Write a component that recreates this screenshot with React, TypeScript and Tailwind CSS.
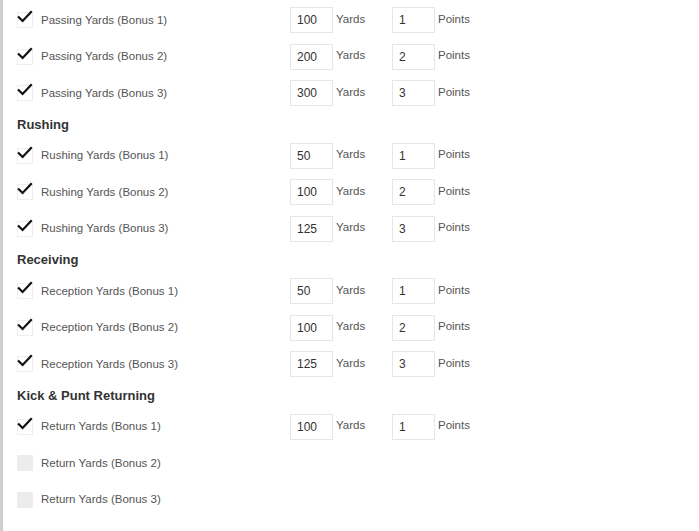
const sections = [
  {
    title: null,
    rows: [
      { label: "Passing Yards (Bonus 1)", on: true, yards: "100", points: "1" },
      { label: "Passing Yards (Bonus 2)", on: true, yards: "200", points: "2" },
      { label: "Passing Yards (Bonus 3)", on: true, yards: "300", points: "3" },
    ],
  },
  {
    title: "Rushing",
    rows: [
      { label: "Rushing Yards (Bonus 1)", on: true, yards: "50", points: "1" },
      { label: "Rushing Yards (Bonus 2)", on: true, yards: "100", points: "2" },
      { label: "Rushing Yards (Bonus 3)", on: true, yards: "125", points: "3" },
    ],
  },
  {
    title: "Receiving",
    rows: [
      { label: "Reception Yards (Bonus 1)", on: true, yards: "50", points: "1" },
      { label: "Reception Yards (Bonus 2)", on: true, yards: "100", points: "2" },
      { label: "Reception Yards (Bonus 3)", on: true, yards: "125", points: "3" },
    ],
  },
  {
    title: "Kick & Punt Returning",
    rows: [
      { label: "Return Yards (Bonus 1)", on: true, yards: "100", points: "1" },
      { label: "Return Yards (Bonus 2)", on: false, yards: "", points: "" },
      { label: "Return Yards (Bonus 3)", on: false, yards: "", points: "" },
    ],
  },
];

type Row = { label: string; on: boolean; yards: string; points: string };

// ─── Checkbox ───
function Check({ on }: { on: boolean }) {
  if (!on) return <div className="w-4 h-4 bg-[#ececec] rounded-[1px]" />;
  return (
    <div className="relative w-4 h-4 bg-white border border-[#eeeeee]">
      <svg
        className="absolute -top-[4px] -left-[1px]"
        width="16"
        height="16"
        viewBox="0 0 16 16"
        fill="none"
      >
        <path d="M1.8 8.2 L5.6 12 L14 3" stroke="#111" strokeWidth="2.2" strokeLinecap="square" />
      </svg>
    </div>
  );
}

function Field({ value }: { value: string }) {
  return (
    <div className="w-[43px] h-[26px] border border-[#e6e6e6] bg-white flex items-center pl-[6px] text-[12px] text-[#333]">
      {value}
    </div>
  );
}

function BonusRow({ row }: { row: Row }) {
  return (
    <div className="flex items-center h-[36.5px]">
      <Check on={row.on} />
      <div className="ml-2 w-[249px] text-[11.5px] text-[#555]">{row.label}</div>
      {row.on && (
        <>
          <Field value={row.yards} />
          <div className="ml-[3px] w-[56px] -mt-[2px] text-[11.5px] text-[#555]">Yards</div>
          <Field value={row.points} />
          <div className="ml-[3px] -mt-[2px] text-[11.5px] text-[#555]">Points</div>
        </>
      )}
    </div>
  );
}

export default function App() {
  return (
    <div className="w-[699px] h-[531px] bg-white flex overflow-hidden font-['Liberation_Sans',Arial,sans-serif]">
      <div className="w-[3px] bg-[#cfcfcf]" />
      <div className="pl-[14px] pt-[2px] flex flex-col">
        {sections.map((s, i) => (
          <div key={i} className="flex flex-col">
            {s.title && (
              <div className="h-[26px] pt-[3px] text-[13px] font-bold text-[#333]">{s.title}</div>
            )}
            {s.rows.map((r) => (
              <BonusRow key={r.label} row={r} />
            ))}
          </div>
        ))}
      </div>
    </div>
  );
}
